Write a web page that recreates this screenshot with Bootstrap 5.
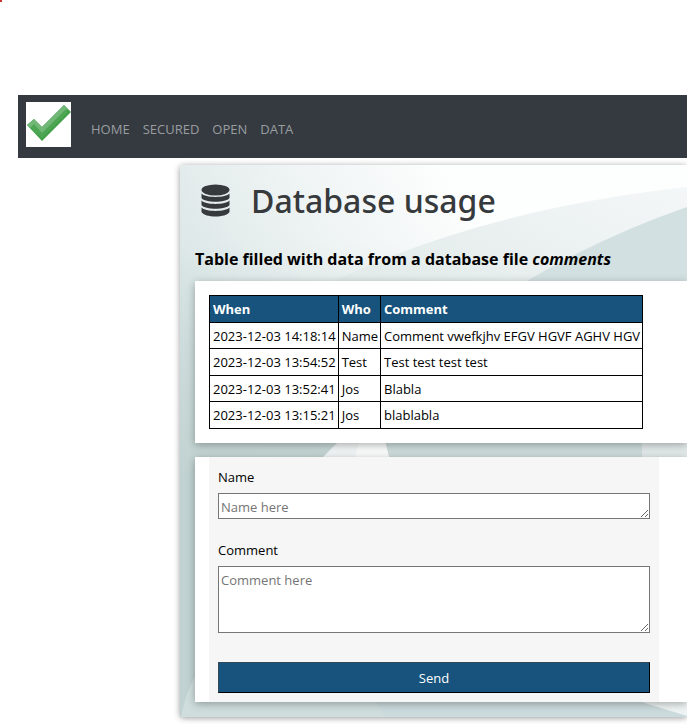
<!DOCTYPE html>
<html lang="en">
<head>
<meta charset="utf-8">
<meta name="viewport" content="width=device-width, initial-scale=1">
<title>Database usage</title>
<link href="https://cdn.jsdelivr.net/npm/bootstrap@5.3.0/dist/css/bootstrap.min.css" rel="stylesheet">
<style>
body{font-family:"Open Sans","Noto Sans",sans-serif;font-size:13px;line-height:20px;color:#000;background:#fff;overflow-x:hidden}
.topspace{height:95px}
.status-dot{width:2px;height:2px;background:#c33;display:block}
.page{margin-left:18px}
.site-nav{background:#343a40;height:63px;padding:0 8px}
.site-nav .nav-link{color:#9a9da0;font-size:13px;line-height:20px;padding:0}
.menu{gap:13px;margin-left:20px;padding-top:5px}
.panel-main{margin:7px 0 30px 162px;padding:14px 0 15px 15px;border-radius:3px;background:#d0dfdf;box-shadow:0 1px 6px rgba(0,0,0,.4)}
.backdrop{position:absolute;inset:0;width:100%;height:100%}
.title{font-family:"Noto Sans","Open Sans",sans-serif;font-size:32px;line-height:44px;font-weight:500;color:#373a3c;gap:21px;padding-left:6px}
.subtitle{font-size:16px;line-height:24px;font-weight:700;margin:24px 0 10px}
.sheet{background:#fff;box-shadow:0 2px 8px rgba(0,0,0,.3)}
.sheet-table{padding:14px;margin-bottom:14px}
.data{width:434px;border-collapse:collapse}
.data th,.data td{border:1px solid #000;padding:3px 2px 3px 3px;line-height:20px;white-space:nowrap}
.data tbody tr:nth-child(odd) td{padding-bottom:2px}
.data th{background:#17537d;color:#fff}
.form-area{width:450px;background:#f6f6f6;padding:9px;margin-left:14px}
.form-area label{line-height:22px;margin-bottom:5px;display:block}
.field{width:100%;border:1px solid #767676;padding:3px 2px 0;line-height:20px;display:block;background:#fff;overflow:hidden}
.field::placeholder{color:#757575;opacity:1}
.field-name{height:26px;margin-bottom:20px}
.field-comment{height:67px;margin-bottom:29px}
.send{width:100%;height:31px;border:1px solid #000;border-top-color:#34495a;border-left-color:#34495a;background:#17537d;color:#fff}
</style>
<script src="https://cdn.jsdelivr.net/npm/bootstrap@5.3.0/dist/js/bootstrap.bundle.min.js"></script>
</head>
<body>
<div class="topspace"><span class="status-dot"></span></div>
<div class="page">
  <nav class="site-nav d-flex align-items-center">
    <a href="#" aria-label="Start" class="d-block mb-1"><svg class="d-block" width="45" height="45" viewBox="0 0 45 45">
      <rect width="45" height="45" fill="#fff"/>
      <path d="M1 23L8 17L16 25L38 3L45 10L16 39Z" fill="#42a049"/>
      <path d="M1 23L8 17L16 25L38 3L42 7L16 32L8 23L4 26Z" fill="#71b778"/>
      <path d="M4 26L8 22L16 31L40 7L42 10L16 36Z" fill="#4ca653"/>
    </svg></a>
    <div class="menu d-flex">
      <a class="nav-link" href="#">HOME</a><a class="nav-link" href="#">SECURED</a><a class="nav-link" href="#">OPEN</a><a class="nav-link" href="#">DATA</a>
    </div>
  </nav>
  <main class="panel-main position-relative">
    <svg class="backdrop" viewBox="0 0 507 552" preserveAspectRatio="none" aria-hidden="true">
      <defs>
        <linearGradient id="sky" gradientUnits="userSpaceOnUse" x1="0" y1="170" x2="260" y2="0"><stop offset="0" stop-color="#d6e3e3"/><stop offset=".45" stop-color="#eaf0f0"/><stop offset="1" stop-color="#fdfefe"/></linearGradient>
        <linearGradient id="side" x1="0" y1="0" x2="0" y2="1"><stop offset="0" stop-color="#c0d2d1" stop-opacity="0"/><stop offset=".5" stop-color="#c0d2d1"/><stop offset="1" stop-color="#c0d2d1"/></linearGradient>
        <linearGradient id="wave" x1="0" y1="1" x2="1" y2="0"><stop offset="0" stop-color="#dbe5e5"/><stop offset="1" stop-color="#f4f7f7"/></linearGradient>
      </defs>
      <rect width="507" height="552" fill="url(#sky)"/>
      <rect width="507" height="472" y="80" fill="url(#side)"/>
      <path d="M150 118Q300 45 507 22V200H150Z" fill="url(#wave)"/>
      <path d="M340 120Q420 72 507 42V200H340Z" fill="#d3e0e1"/>
      <path d="M140 295L160 275H205L210 295Z" fill="#f2f5f5"/><path d="M174 295L180 275H205L210 295Z" fill="#fafbfb"/>
      <path d="M205 275H507V295H210Z" fill="#cddbdb"/><path d="M462 270H507V295H462Z" fill="#e2e9e9"/>
      <path d="M1 552Q6 526 17 508V535H507V552Z" fill="#cfdedd"/>
      <path d="M195 536L205 552H507V536Z" fill="#cbdadd"/><path d="M455 535L507 551V535Z" fill="#eef3f3"/>
    </svg>
    <div class="position-relative">
      <h1 class="title d-flex align-items-center m-0">
        <svg width="29" height="34" viewBox="0 0 29 34" fill="#373a3c" aria-hidden="true"><ellipse cx="14.500" cy="6" rx="14" ry="5.500"/><path d="M.5 9.500C4 14 25 14 28.500 9.500V14C25 19 4 19 .5 14Z"/><path d="M.5 16.500C4 21 25 21 28.500 16.500V21C25 26 4 26 .5 21Z"/><path d="M.5 23.500C4 28 25 28 28.500 23.500V28C25 34 4 34 .5 28Z"/></svg>
        <span>Database usage</span>
      </h1>
      <h2 class="subtitle">Table filled with data from a database file <em>comments</em></h2>
      <section class="sheet sheet-table">
        <table class="data">
          <thead><tr><th>When</th><th>Who</th><th>Comment</th></tr></thead>
          <tbody>
            <tr><td>2023-12-03 14:18:14</td><td>Name</td><td>Comment vwefkjhv EFGV HGVF AGHV HGV</td></tr>
            <tr><td>2023-12-03 13:54:52</td><td>Test</td><td>Test test test test</td></tr>
            <tr><td>2023-12-03 13:52:41</td><td>Jos</td><td>Blabla</td></tr>
            <tr><td>2023-12-03 13:15:21</td><td>Jos</td><td>blablabla</td></tr>
          </tbody>
        </table>
      </section>
      <section class="sheet">
        <form class="form-area">
          <label for="name">Name</label>
          <textarea id="name" class="field field-name" placeholder="Name here"></textarea>
          <label for="comment">Comment</label>
          <textarea id="comment" class="field field-comment" placeholder="Comment here"></textarea>
          <button type="button" class="send d-block rounded-0">Send</button>
        </form>
      </section>
    </div>
  </main>
</div>
</body>
</html>
